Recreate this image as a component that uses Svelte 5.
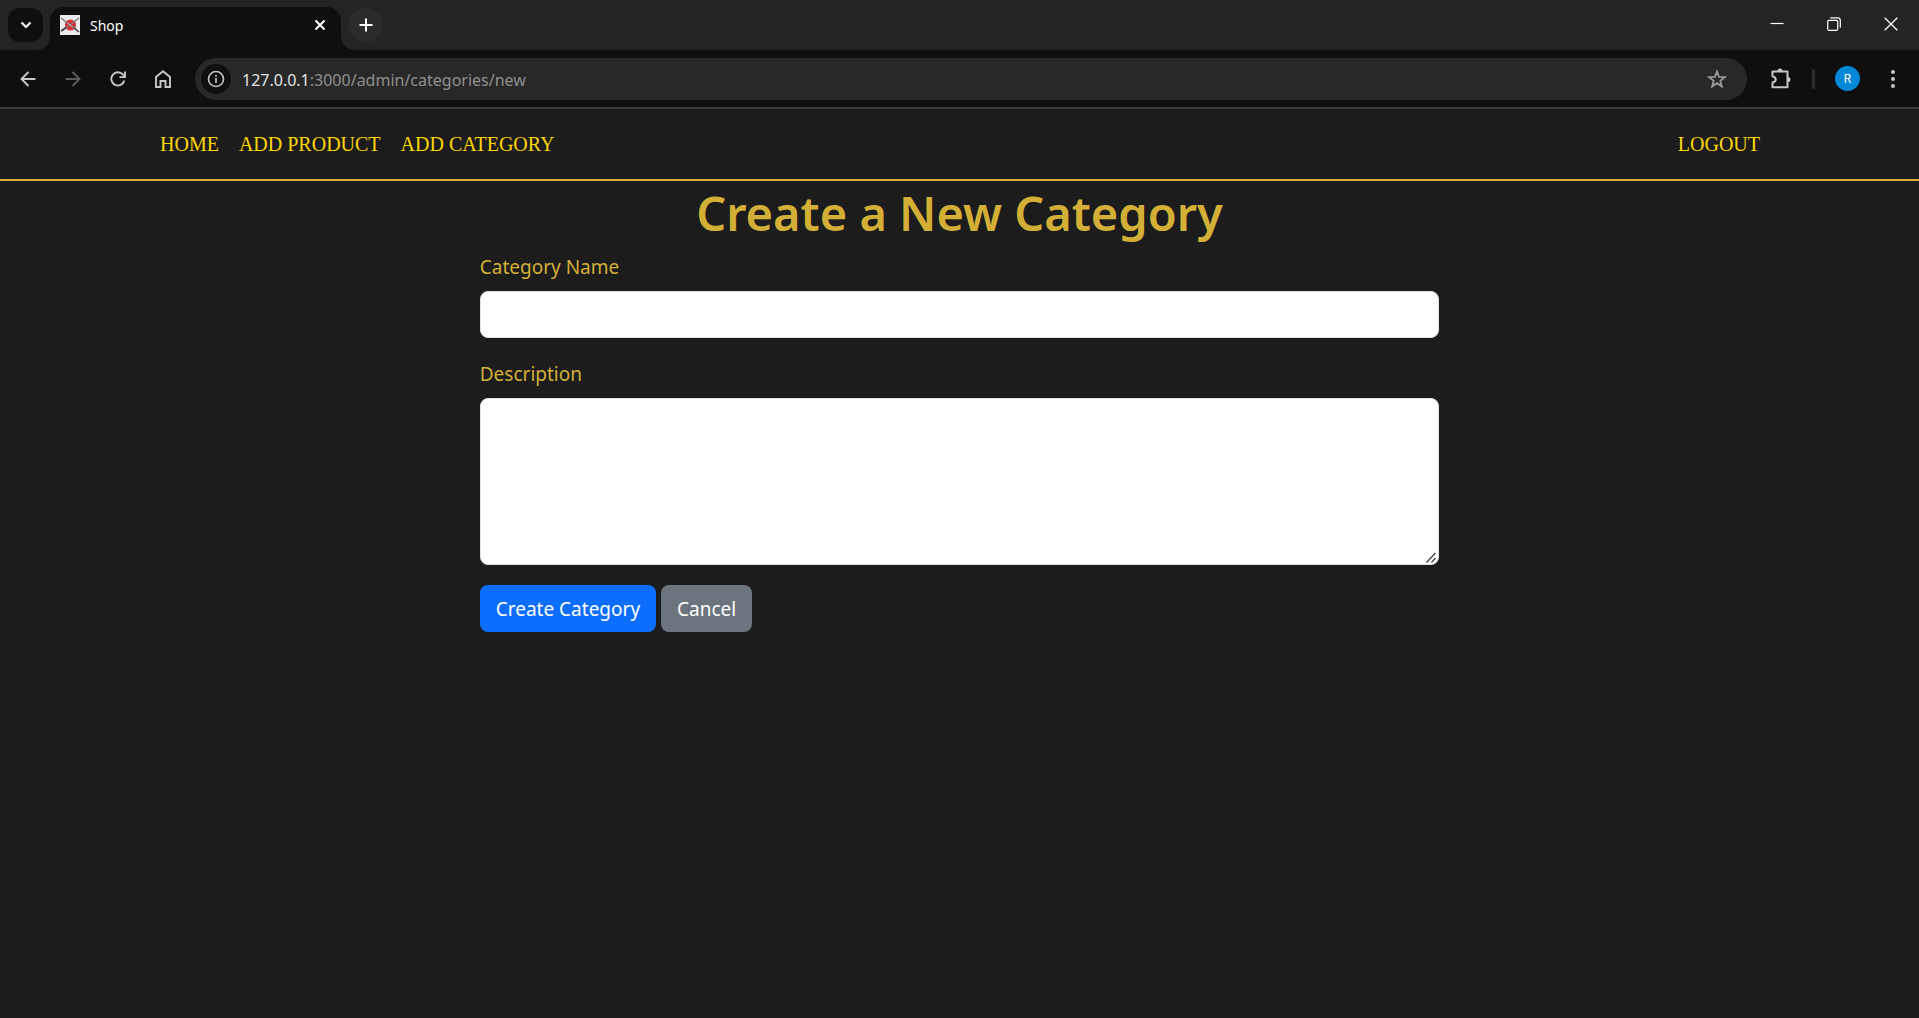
<script>
  let name = $state('');
  let description = $state('');

  const links = [
    { label: 'HOME', href: '#home' },
    { label: 'ADD PRODUCT', href: '#add-product' },
    { label: 'ADD CATEGORY', href: '#add-category' },
  ];
</script>

<div class="window">
  <header class="titlebar">
    <div class="strip-start">
      <button class="tab-search" aria-label="Search tabs">
        <svg width="12" height="12" viewBox="0 0 12 12"><path d="M1.5 3.5 6 8l4.5-4.5" stroke-width="2.2" /></svg>
      </button>
    </div>
    <div class="tab-slot">
      <div class="tab">
        <svg class="favicon" width="20" height="20" viewBox="0 0 20 20">
          <rect width="20" height="20" fill="#ececee" stroke="none" />
          <circle cx="10.5" cy="10" r="5.6" fill="#de3236" stroke="none" />
          <path d="M6 7.5l3 2M13 11.500l2 1" stroke="#a34c50" stroke-width="2" />
          <path d="M1 3l17 13M19 3L2 16" stroke="#77797d" stroke-width="1.4" />
          <path d="M1 16l5-3.500M14 13l5 4" stroke="#444649" stroke-width="1.6" />
          <path d="M7.500 8l5 4" stroke="#d6b8b8" stroke-width="1" />
        </svg>
        <span class="tab-title">Shop</span>
        <button class="tab-close" aria-label="Close tab">
          <svg width="12" height="12" viewBox="0 0 12 12"><path d="M1.500 1.500l9 9M10.500 1.500l-9 9" stroke-width="2" /></svg>
        </button>
      </div>
    </div>
    <div class="strip-end">
      <button class="new-tab" aria-label="New tab">
        <svg width="14" height="14" viewBox="0 0 14 14"><path d="M7 .5v13M.5 7h13" stroke-width="2" /></svg>
      </button>
      <div class="controls">
        <button aria-label="Minimize">
          <svg width="14" height="14" viewBox="0 0 14 14"><path d="M.5 6.500h13" stroke-width="1.200" /></svg>
        </button>
        <button aria-label="Restore">
          <svg width="14" height="14" viewBox="0 0 14 14"><rect x=".7" y="3.300" width="10" height="10" rx="1.200" stroke-width="1.200" /><path d="M3.300 .9h7.400q2.600 0 2.600 2.600v7.300" stroke-width="1.200" /></svg>
        </button>
        <button aria-label="Close">
          <svg width="14" height="14" viewBox="0 0 14 14"><path d="M.7 .7l12.600 12.600M13.300 .7L.7 13.300" stroke-width="1.300" /></svg>
        </button>
      </div>
    </div>
  </header>

  <div class="toolbar">
    <div class="history">
      <button aria-label="Back">
        <svg width="16" height="16" viewBox="0 0 16 16"><path d="M15.500 8H1.800M8.500 1L1.500 8l7 7" stroke-width="1.900" /></svg>
      </button>
      <button class="dim" aria-label="Forward">
        <svg width="16" height="16" viewBox="0 0 16 16"><path d="M.5 8h13.700M7.500 1l7 7-7 7" stroke-width="1.900" /></svg>
      </button>
      <button aria-label="Reload">
        <svg width="16" height="16" viewBox="0 0 16 16"><path d="M14.300 9.500A6.600 6.600 0 1 1 13 3.700L15 5.700M15 .5v5.600H9.500" stroke-width="1.900" /></svg>
      </button>
      <button aria-label="Home page">
        <svg width="16" height="18" viewBox="0 0 16 18"><path d="M1 17V7l7-5.700L15 7v10h-4.500v-6h-5v6z" stroke-width="1.900" /></svg>
      </button>
    </div>
    <div class="omnibox">
      <button class="site-info" aria-label="View site information">
        <svg width="18" height="18" viewBox="0 0 18 18"><circle cx="9" cy="9" r="7.500" stroke-width="1.600" /><path d="M9 8v5M9 5v1.700" stroke-width="1.700" /></svg>
      </button>
      <div class="url" role="textbox" tabindex="0" aria-label="Address" contenteditable="true" spellcheck="false"><span class="host">127.0.0.1</span>:3000/admin/categories/new</div>
      <button class="star" aria-label="Bookmark this page">
        <svg width="20" height="20" viewBox="0 0 20 20"><path d="M10 2.500l2 5.300 5.900.3-4.600 3.700 1.500 5.600L10 14.200l-4.800 3.200 1.500-5.600L2.100 8.100 8 7.800z" stroke-width="1.800" /></svg>
      </button>
    </div>
    <button class="tool" aria-label="Extensions">
      <svg width="22" height="22" viewBox="0 0 22 22">
        <path d="M2.500 3.500h15v15.800h-15v-4.800q3.200-.8 3.200-3.100T2.500 8.300z" stroke-width="2" stroke-linejoin="round" />
        <path d="M7.500 3a2.500 2.500 0 0 1 5 0zM18 8.900a2.500 2.500 0 0 1 0 5z" fill="currentColor" stroke="none" />
      </svg>
    </button>
    <span class="divider"></span>
    <button class="avatar" aria-label="Profile R">R</button>
    <button class="tool menu" aria-label="Browser menu">
      <svg width="6" height="20" viewBox="0 0 6 20"><g fill="currentColor" stroke="none"><circle cx="3" cy="3" r="2" /><circle cx="3" cy="10" r="2" /><circle cx="3" cy="17" r="2" /></g></svg>
    </button>
  </div>

  <nav class="site-nav">
    <ul>
      {#each links as link}
        <li><a href={link.href}>{link.label}</a></li>
      {/each}
    </ul>
    <a href="#logout">LOGOUT</a>
  </nav>

  <main>
    <h1>Create a New Category</h1>
    <form onsubmit={(e) => e.preventDefault()}>
      <div class="field">
        <label for="name">Category Name</label>
        <input id="name" type="text" bind:value={name} />
      </div>
      <div class="field">
        <label for="description">Description</label>
        <textarea id="description" rows="5" bind:value={description}></textarea>
      </div>
      <div class="actions">
        <button type="submit" class="btn primary">Create Category</button>
        <a href="#categories" class="btn secondary">Cancel</a>
      </div>
    </form>
  </main>
</div>

<style>
  :global(body) {
    background: #1c1c1c;
  }
  * {
    box-sizing: border-box;
  }
  .window {
    min-height: 100vh;
    background: #1c1c1c;
    font-family: 'Noto Sans', 'Open Sans', sans-serif;
  }
  button {
    display: flex;
    align-items: center;
    justify-content: center;
    margin: 0;
    padding: 0;
    border: 0;
    background: none;
    color: inherit;
    font: inherit;
    cursor: pointer;
  }
  svg {
    display: block;
    flex: none;
    fill: none;
    stroke: currentColor;
  }

  .titlebar {
    display: flex;
    height: 50px;
    background: #0f0f0f;
    color: #fff;
  }
  .strip-start {
    width: 50px;
    padding: 8px;
    background: #242424;
    border-bottom-right-radius: 14px;
  }
  .tab-search {
    width: 35px;
    height: 34px;
    border-radius: 12px;
    background: #0f0f0f;
  }
  .tab-slot {
    width: 291px;
    padding-top: 7px;
    background: linear-gradient(#242424 50%, #0f0f0f 50%);
  }
  .tab {
    display: flex;
    align-items: center;
    gap: 10px;
    height: 43px;
    padding: 0 10px 7px;
    border-radius: 14px 14px 0 0;
    background: #0f0f0f;
  }
  .tab-title {
    flex: 1;
    padding-top: 2px;
    font-size: 14px;
    line-height: 20px;
  }
  .tab-close {
    width: 22px;
    height: 22px;
  }
  .strip-end {
    display: flex;
    flex: 1;
    justify-content: space-between;
    padding: 8px 0 8px 7px;
    background: #242424;
    border-bottom-left-radius: 14px;
  }
  .new-tab {
    width: 35px;
    height: 34px;
    border-radius: 50%;
    background: #2b2b2b;
  }
  .controls {
    display: flex;
  }
  .controls button {
    width: 57px;
    height: 32px;
  }

  .toolbar {
    display: flex;
    align-items: center;
    height: 59px;
    padding: 0 15px 0 5px;
    border-bottom: 2px solid #3c3c3c;
    background: #0f0f0f;
    color: #c7c7c7;
  }
  .history {
    display: flex;
    width: 190px;
    padding-right: 10px;
  }
  .history button {
    width: 45px;
    height: 42px;
  }
  .history .dim {
    color: #5c5c5c;
  }
  .omnibox {
    display: flex;
    flex: 1;
    align-items: center;
    height: 42px;
    padding: 0 20px 0 6px;
    border-radius: 21px;
    background: #282828;
  }
  .site-info {
    width: 30px;
    height: 30px;
    border-radius: 50%;
    background: #0f0f0f;
  }
  .url {
    flex: 1;
    padding: 2px 0 0 11px;
    outline: 0;
    color: #8f8f8f;
    font-size: 16px;
    line-height: 24px;
    white-space: nowrap;
  }
  .host {
    color: #e3e3e3;
  }
  .star {
    color: #9b9b9b;
  }
  .tool {
    width: 40px;
    height: 36px;
    margin-left: 14px;
  }
  .divider {
    width: 3px;
    height: 20px;
    margin: 0 20px 0 11px;
    border-radius: 2px;
    background: #2d2d2d;
  }
  .avatar {
    width: 25px;
    height: 25px;
    border-radius: 50%;
    background: #0288d8;
    color: #fff;
    font: 12px/24px Roboto, sans-serif;
  }
  .menu {
    width: 22px;
    margin-left: 22px;
  }

  .site-nav {
    display: flex;
    align-items: center;
    justify-content: space-between;
    height: 72px;
    padding: 0 159px 0 160px;
    border-bottom: 2px solid #d4af37;
    font-family: 'Liberation Serif', serif;
    font-size: 20px;
    line-height: 30px;
  }
  .site-nav ul {
    display: flex;
    gap: 20px;
    margin: 0;
    padding: 0;
    list-style: none;
  }
  .site-nav a {
    color: #ffd700;
    text-decoration: none;
  }

  main {
    color: #d4af37;
  }
  h1 {
    margin: 0 0 6px;
    font-size: 47px;
    font-weight: 600;
    line-height: 64px;
    text-align: center;
  }
  form {
    width: 50%;
    margin: 0 auto;
    font-size: 19px;
    line-height: 30px;
  }
  .field {
    margin-bottom: 20px;
  }
  label {
    display: block;
    width: fit-content;
    margin-bottom: 8px;
    line-height: 32px;
  }
  input,
  textarea {
    display: block;
    width: 100%;
    padding: 8px 15px;
    border: 1px solid #dee2e6;
    border-radius: 8px;
    outline: 0;
    background: #fff;
    color: #212529;
    font: inherit;
  }
  input {
    height: 47px;
  }
  textarea {
    height: 167px;
    resize: vertical;
  }
  textarea::-webkit-resizer {
    background: url("data:image/svg+xml,%3Csvg xmlns='http://www.w3.org/2000/svg' width='15' height='15'%3E%3Cpath d='M3.500 13.500l9-9.500M8.500 13.500l4-4.500' stroke='%23505050' stroke-width='1.600'/%3E%3C/svg%3E") no-repeat right bottom;
  }
  .actions {
    display: flex;
    gap: 5px;
  }
  .btn {
    padding: 9px 16px 8px;
    border-radius: 8px;
    color: #fff;
    text-decoration: none;
  }
  .primary {
    background: #0d6efd;
  }
  .secondary {
    background: #6c757d;
  }
</style>
